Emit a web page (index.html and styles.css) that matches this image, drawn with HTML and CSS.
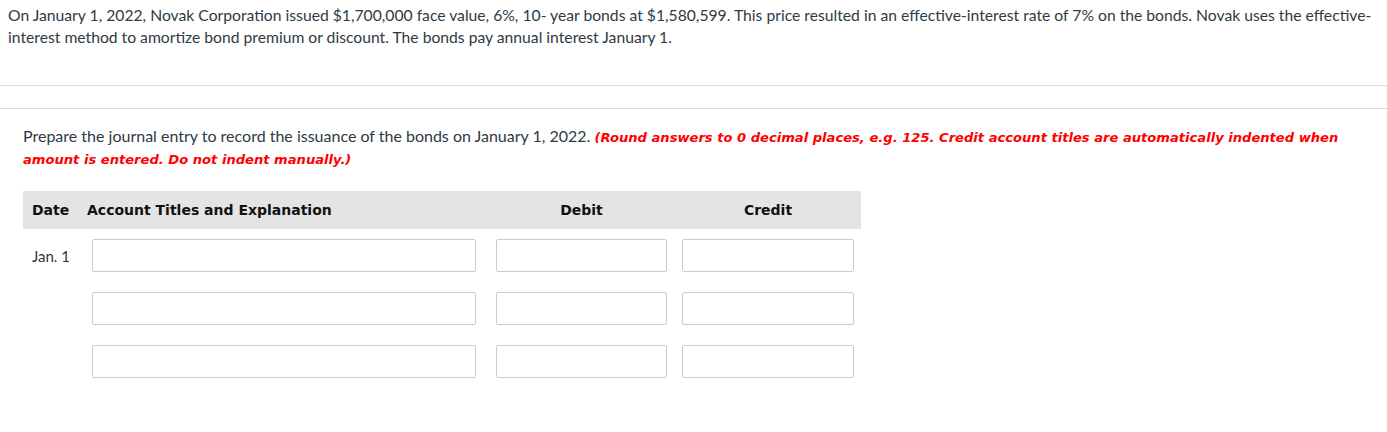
FILE: index.html
```html
<!DOCTYPE html>
<html>
<head>
<meta charset="utf-8">
<link rel="stylesheet" href="styles.css">
</head>
<body>
<p class="intro">On January 1, 2022, Novak Corporation issued $1,700,000 face value, 6%, 10- year bonds at $1,580,599. This price resulted in an effective-interest rate of 7% on the bonds. Novak uses the effective-interest method to amortize bond premium or discount. The bonds pay annual interest January 1.</p>
<div class="rule"></div>
<div class="rule rule-bottom"></div>
<section class="question">
  <p class="prompt">Prepare the journal entry to record the issuance of the bonds on January 1, 2022. <em class="note">(Round answers to 0 decimal places, e.g. 125. Credit account titles are automatically indented when amount is entered. Do not indent manually.)</em></p>
  <div class="journal">
    <div class="jhead">
      <div class="hcell hdate">Date</div>
      <div class="hcell hacct">Account Titles and Explanation</div>
      <div class="hcell hnum">Debit</div>
      <div class="hcell hnum hcredit">Credit</div>
    </div>
    <div class="jrow">
      <div class="jdate">Jan. 1</div>
      <input class="field acct" type="text">
      <input class="field debit" type="text">
      <input class="field credit" type="text">
    </div>
    <div class="jrow">
      <div class="jdate"></div>
      <input class="field acct" type="text">
      <input class="field debit" type="text">
      <input class="field credit" type="text">
    </div>
    <div class="jrow">
      <div class="jdate"></div>
      <input class="field acct" type="text">
      <input class="field debit" type="text">
      <input class="field credit" type="text">
    </div>
  </div>
</section>
</body>
</html>
```

FILE: styles.css
```css
html, body {
  margin: 0;
  padding: 0;
  background: #fff;
}
body {
  font-family: Lato, "Open Sans", sans-serif;
  color: #2e3a44;
  font-size: 16px;
  line-height: 22px;
}
.intro {
  margin: 0;
  padding: 4px 0 0 8px;
  box-sizing: border-box;
  height: 85px;
  font-size: 15.7px;
}
.rule {
  height: 1px;
  background: #dcdcdc;
}
.rule-bottom {
  margin-top: 22px;
}
.question {
  padding: 16px 0 0 23px;
}
.prompt {
  margin: 0;
  padding-right: 20px;
  height: 44px;
}
.note {
  font-family: "DejaVu Sans", Verdana, sans-serif;
  color: #ff0000;
  font-weight: 700;
  font-style: oblique;
  font-size: 13.1px;
  line-height: 16px;
}
.journal {
  margin-top: 22px;
  width: 838px;
}
.jhead,
.jrow {
  display: grid;
  align-items: center;
}
.jhead {
  background: #e4e4e4;
  height: 38px;
  grid-template-columns: 64px 409px 171px 187px;
}
.hcell {
  font-family: "DejaVu Sans", Verdana, sans-serif;
  font-weight: 700;
  font-size: 14px;
  color: #111;
}
.hdate {
  padding-left: 9px;
}
.hnum {
  text-align: center;
}
.hcredit {
  margin-left: 15px;
}
.jrow {
  margin-top: 10px;
  grid-template-columns: 69px 384px 191px 187px;
}
.jrow + .jrow {
  margin-top: 20px;
}
.jdate {
  padding-left: 9px;
  font-size: 15px;
  color: #333;
}
.field {
  box-sizing: border-box;
  height: 33px;
  margin: 0;
  border: 1px solid #cccccc;
  border-radius: 2px;
  background: #fff;
  padding: 0 6px;
  font: inherit;
}
.debit {
  margin-left: 20px;
  width: 171px;
}
.credit {
  margin-left: 15px;
  width: 172px;
}
```
